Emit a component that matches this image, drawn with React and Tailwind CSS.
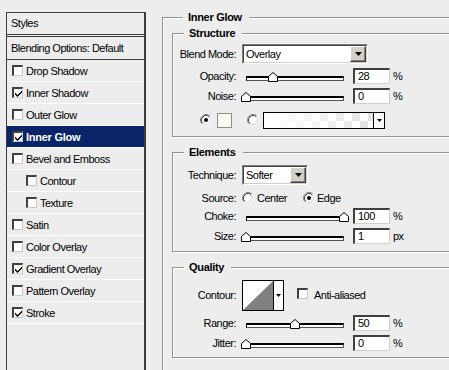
import React from "react";

function Check({ checked }) {
  return (
    <span className="inline-flex w-[11px] h-[11px] shrink-0 items-center justify-center bg-white border-t-2 border-l-2 border-r border-b border-t-[#404040] border-l-[#404040] border-r-[#c8c8c8] border-b-[#c8c8c8]">
      {checked && (
        <svg width="7" height="7" viewBox="0 0 7 7">
          <polygon points="0,2.5 2.5,5 7,0.5 7,2.5 2.5,7 0,4.5" fill="#000" />
        </svg>
      )}
    </span>
  );
}

function Radio({ checked }) {
  return (
    <svg width="12" height="12" viewBox="0 0 12 12" className="shrink-0">
      <circle cx="6" cy="6" r="5" fill="#fff" />
      <path d="M2.11 9.89A5.5 5.5 0 0 1 9.89 2.11" fill="none" stroke="#808080" />
      <path d="M2.11 9.89A5.5 5.5 0 0 0 9.89 2.11" fill="none" stroke="#fff" />
      <path d="M2.82 9.18A4.5 4.5 0 0 1 9.18 2.82" fill="none" stroke="#404040" />
      <path d="M2.82 9.18A4.5 4.5 0 0 0 9.18 2.82" fill="none" stroke="#d4d0c8" />
      {checked && <circle cx="6" cy="6" r="2" fill="#000" />}
    </svg>
  );
}

function StyleRow({ label, checked, selected, indent }) {
  return (
    <div
      className={
        "h-[22px] flex items-center gap-[3px] border-b border-white " +
        (indent ? "pl-[19px] " : "pl-[5px] ") +
        (selected ? "bg-[#0a246a] text-white font-bold tracking-[-0.25px]" : "tracking-[-0.5px]")
      }
    >
      <Check checked={checked} />
      <span className="leading-[14px] whitespace-nowrap">{label}</span>
    </div>
  );
}

function Box({ title, children, className }) {
  return (
    <div
      className={
        "border border-[#919191] shadow-[inset_1px_1px_0_#fff,1px_1px_0_#fff] " + className
      }
    >
      <div className="-mt-[8px] ml-[11px] w-fit pl-[5px] pr-[7px] bg-[#ededed] leading-[14px] h-[14px] font-bold tracking-[-0.3px] whitespace-nowrap">
        {title}
      </div>
      {children}
    </div>
  );
}

function Label({ children }) {
  return (
    <div className="w-[69px] shrink-0 text-right pr-[6px] tracking-[-0.5px] leading-[14px] whitespace-nowrap">
      {children}
    </div>
  );
}

function DownTri({ w = 7, h = 4 }) {
  return (
    <svg width={w} height={h} viewBox={`0 0 ${w} ${h}`}>
      <path d={`M0 0H${w}L${w / 2} ${h}Z`} fill="#000" />
    </svg>
  );
}

function Select({ width, value }) {
  return (
    <div
      className={
        width +
        " h-[20px] flex border-t border-l border-t-[#808080] border-l-[#808080] border-b border-r border-b-white border-r-white"
      }
    >
      <div className="flex-1 flex bg-white border-t border-l border-t-[#404040] border-l-[#404040] border-b border-r border-b-[#d4d0c8] border-r-[#d4d0c8]">
        <div className="flex-1 pl-[2px] leading-[16px] tracking-[-0.5px]">{value}</div>
        <div className="w-[16px] bg-[#d4d0c8] border-t border-l border-t-white border-l-white border-b border-r border-b-[#404040] border-r-[#404040] shadow-[inset_-1px_-1px_0_#808080] flex items-center justify-center">
          <DownTri />
        </div>
      </div>
    </div>
  );
}

function Field({ value }) {
  return (
    <div className="w-[37px] h-[16px] shrink-0 bg-white border-t-2 border-l-2 border-t-[#404040] border-l-[#404040] border-r border-b border-r-[#d4d0c8] border-b-[#d4d0c8] pl-[3px] leading-[13px] tracking-[-0.5px]">
      {value}
    </div>
  );
}

function Slider({ pct }) {
  const left = 4 + (pct / 100) * 98 - 5;
  return (
    <div className="relative w-[111px] h-[16px] shrink-0">
      <div className="ml-[4px] mt-[8px] w-[98px] h-[5px] bg-white border-t-2 border-l border-t-black border-l-black border-b border-r border-b-[#555] border-r-[#555]" />
      <svg
        width="10"
        height="10"
        viewBox="0 0 10 10"
        className="absolute top-[4px]"
        style={{ left: `${left}px` }}
      >
        <polygon points="0.5,9.5 0.5,4.5 5,0.5 9.5,4.5 9.5,9.5" fill="#fff" stroke="#000" />
      </svg>
    </div>
  );
}

function SliderRow({ label, pct, value, unit, className }) {
  return (
    <div className={"flex items-center h-[16px] " + className}>
      <Label>{label}</Label>
      <Slider pct={pct} />
      <Field value={value} />
      <span className="ml-[3px] tracking-[-0.5px] leading-[14px]">{unit}</span>
    </div>
  );
}

export default function App() {
  return (
    <div className="w-[449px] h-[370px] overflow-hidden bg-[#ededed] flex items-start text-[11px] text-black font-['Liberation_Sans',Arial,sans-serif]">
      {/* Left styles list */}
      <div className="ml-[6px] mt-[12px] w-[140px] h-[370px] shrink-0 border-t border-l border-r-2 border-[#3c3c3c] flex flex-col">
        <div className="h-[24px] pl-[4px] flex items-center border-b-[3px] border-double border-[#3c3c3c] tracking-[-0.5px]">
          Styles
        </div>
        <div className="h-[23px] pl-[4px] flex items-center border-b border-[#3c3c3c] tracking-[-0.5px] whitespace-nowrap">
          Blending Options: Default
        </div>
        <StyleRow label="Drop Shadow" />
        <StyleRow label="Inner Shadow" checked />
        <StyleRow label="Outer Glow" />
        <StyleRow label="Inner Glow" checked selected />
        <StyleRow label="Bevel and Emboss" />
        <StyleRow label="Contour" indent />
        <StyleRow label="Texture" indent />
        <StyleRow label="Satin" />
        <StyleRow label="Color Overlay" />
        <StyleRow label="Gradient Overlay" checked />
        <StyleRow label="Pattern Overlay" />
        <StyleRow label="Stroke" checked />
      </div>

      {/* Right settings */}
      <Box title="Inner Glow" className="ml-[16px] mt-[17px] w-[320px] h-[380px] shrink-0 pl-[9px]">
        <Box title="Structure" className="mt-[9px] pb-[8px]">
          <div className="flex items-center h-[20px] mt-[4px]">
            <Label>Blend Mode:</Label>
            <Select width="w-[126px]" value="Overlay" />
          </div>
          <SliderRow label="Opacity:" pct={28} value="28" unit="%" className="mt-[4px]" />
          <SliderRow label="Noise:" pct={0} value="0" unit="%" className="mt-[4px]" />
          <div className="flex items-center h-[16px] mt-[8px] pl-[27px]">
            <Radio checked />
            <div className="ml-[5px] w-[15px] h-[15px] bg-[#fafaf2] border border-[#8c8c8c]" />
            <div className="ml-[15px]">
              <Radio />
            </div>
            <div className="ml-[4px] w-[122px] h-[17px] border border-black flex">
              <div className="flex-1 bg-[image:linear-gradient(to_right,#fff_5%,rgba(255,255,255,0)),repeating-conic-gradient(#e2e2e2_0_25%,#fff_0_50%)] bg-[length:100%_100%,16px_16px]" />
              <div className="w-[11px] border-l border-black bg-white flex items-center justify-center">
                <DownTri w={5} h={3} />
              </div>
            </div>
          </div>
        </Box>

        <Box title="Elements" className="mt-[15px] pb-[7px]">
          <div className="flex items-center h-[20px] mt-[6px]">
            <Label>Technique:</Label>
            <Select width="w-[66px]" value="Softer" />
          </div>
          <div className="flex items-center h-[16px] mt-[5px]">
            <Label>Source:</Label>
            <div className="w-[61px] flex items-center">
              <Radio />
              <span className="ml-[3px] tracking-[-0.5px] leading-[14px]">Center</span>
            </div>
            <Radio checked />
            <span className="ml-[2px] tracking-[-0.5px] leading-[14px]">Edge</span>
          </div>
          <SliderRow label="Choke:" pct={100} value="100" unit="%" className="mt-[2px]" />
          <SliderRow label="Size:" pct={0} value="1" unit="px" className="mt-[4px]" />
        </Box>

        <Box title="Quality" className="mt-[15px] pb-[6px]">
          <div className="flex items-center h-[30px] mt-[6px]">
            <Label>Contour:</Label>
            <div className="w-[42px] h-[31px] border border-black flex bg-white">
              <svg width="30" height="29" viewBox="0 0 30 29" className="shrink-0">
                <rect x="0" y="0" width="30" height="29" fill="#fff" />
                <polygon points="0,29 30,0 30,29" fill="#808080" />
              </svg>
              <div className="flex-1 border-l border-black flex items-center justify-center">
                <DownTri w={5} h={3} />
              </div>
            </div>
            <div className="ml-[13px]">
              <Check />
            </div>
            <span className="ml-[6px] tracking-[-0.5px] leading-[14px]">Anti-aliased</span>
          </div>
          <SliderRow label="Range:" pct={50} value="50" unit="%" className="mt-[5px]" />
          <SliderRow label="Jitter:" pct={0} value="0" unit="%" className="mt-[4px]" />
        </Box>
      </Box>
    </div>
  );
}
